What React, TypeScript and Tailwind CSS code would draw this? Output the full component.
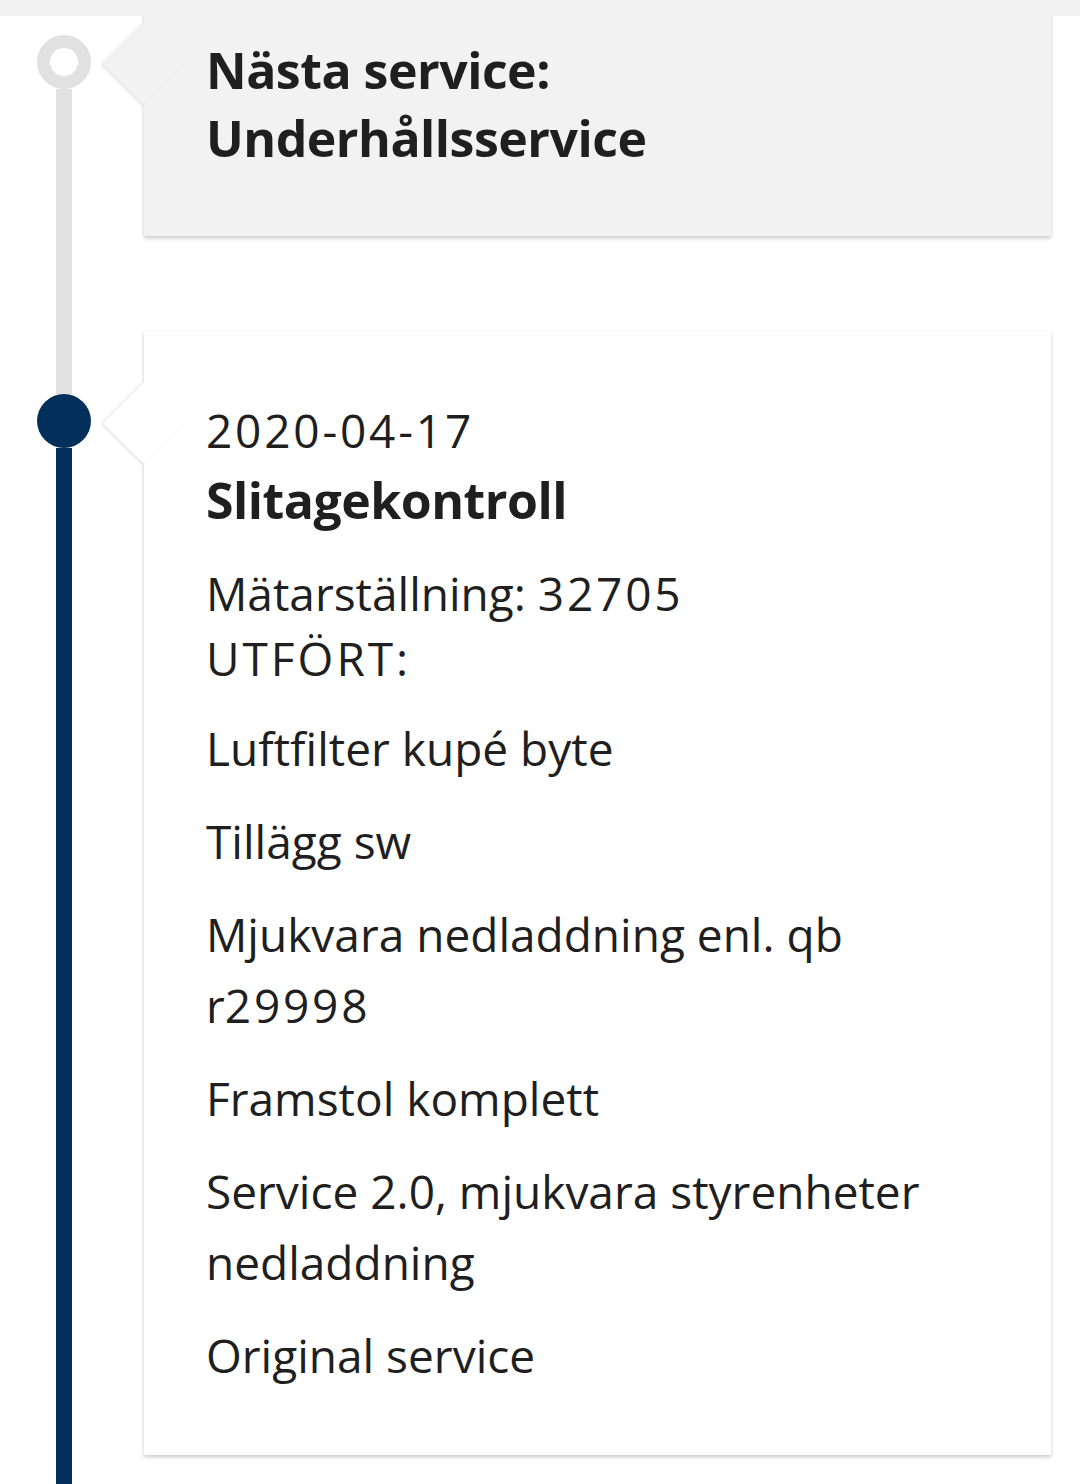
import React from "react";

type Entry = {
  id: string;
  done: boolean;
  date?: string;
  title: string[];
  meter?: string;
  items?: string[];
};

const entries: Entry[] = [
  { id: "next", done: false, title: ["Nästa service:", "Underhållsservice"] },
  {
    id: "2020-04-17",
    done: true,
    date: "2020-04-17",
    title: ["Slitagekontroll"],
    meter: "32705",
    items: [
      "Luftfilter kupé byte",
      "Tillägg sw",
      "Mjukvara nedladdning enl. qb r29998",
      "Framstol komplett",
      "Service 2.0, mjukvara styrenheter nedladdning",
      "Original service",
    ],
  },
];

// digits in the app font are wider, space out longer number runs a bit
const Num = ({ text }: { text: string }) => (
  <>
    {text.split(/(\d{4,}(?:-\d+)*)/).map((part, i) =>
      /^\d{4,}/.test(part) ? (
        <span key={i} className="tracking-[2.8px]">
          {part}
        </span>
      ) : (
        <React.Fragment key={i}>{part}</React.Fragment>
      )
    )}
  </>
);

function TimelineItem({ entry, prev }: { entry: Entry; prev?: Entry }) {
  const lineAbove = !prev ? "bg-transparent" : prev.done ? "bg-[#03305a]" : "bg-[#e1e1e1]";
  const line = entry.done ? "bg-[#03305a]" : "bg-[#e1e1e1]";
  const cardBg = entry.done ? "bg-white" : "bg-[#f2f2f2]";

  return (
    <div className="flex">
      {/* gutter: line + dot */}
      <div className="w-[144px] shrink-0 pl-[37px] flex flex-col">
        <div className="w-[54px] flex flex-col items-center flex-1">
          <div className={`w-4 h-[63px] ${lineAbove}`}></div>
          {entry.done ? (
            <div className="w-[54px] h-[54px] rounded-full bg-[#03305a] shrink-0"></div>
          ) : (
            <div className="w-[54px] h-[54px] rounded-full border-[13px] border-[#e1e1e1] bg-white shrink-0"></div>
          )}
          <div className={`w-4 flex-1 ${line}`}></div>
        </div>
      </div>

      {/* card */}
      <div className="pb-[95px]">
        <div
          className={`relative w-[907px] ${cardBg} shadow-[0_2px_4px_rgba(0,0,0,0.22)] pl-[62px] pr-16 pt-16 pb-16 text-[#1f1f1f]`}
        >
          <div
            className={`absolute left-[-29px] top-[63px] w-[58px] h-[58px] rotate-45 ${cardBg} shadow-[-1px_2px_3px_rgba(30,50,80,0.12)]`}
          ></div>
          <div className="relative">
            {entry.date && (
              <div className="text-[46px] leading-[70px]">
                <Num text={entry.date} />
              </div>
            )}
            {entry.title.map((t) => (
              <div
                key={t}
                className={`text-[50px] font-bold tracking-[-0.5px] ${entry.date ? "leading-[70px]" : "leading-[68px]"}`}
              >
                {t}
              </div>
            ))}
            {entry.meter && (
              <div className="mt-[26px] text-[46px] leading-[65px]">
                <div>
                  Mätarställning: <Num text={entry.meter} />
                </div>
                <div className="tracking-[3px]">UTFÖRT:</div>
              </div>
            )}
            {entry.items && (
              <div className="mt-[22px] flex flex-col gap-[22px]">
                {entry.items.map((it) => (
                  <div key={it} className="text-[46px] leading-[71px]">
                    <Num text={it} />
                  </div>
                ))}
              </div>
            )}
          </div>
        </div>
      </div>
    </div>
  );
}

export default function App() {
  return (
    <div
      className="relative h-[1484px] overflow-hidden bg-white"
      style={{ fontFamily: '"Open Sans", "Noto Sans", sans-serif' }}
    >
      <div className="absolute top-0 left-0 right-0 h-4 bg-[#f2f2f2] z-10"></div>
      <div className="mt-[-28px]">
        {entries.map((e, i) => (
          <TimelineItem key={e.id} entry={e} prev={entries[i - 1]} />
        ))}
      </div>
    </div>
  );
}
